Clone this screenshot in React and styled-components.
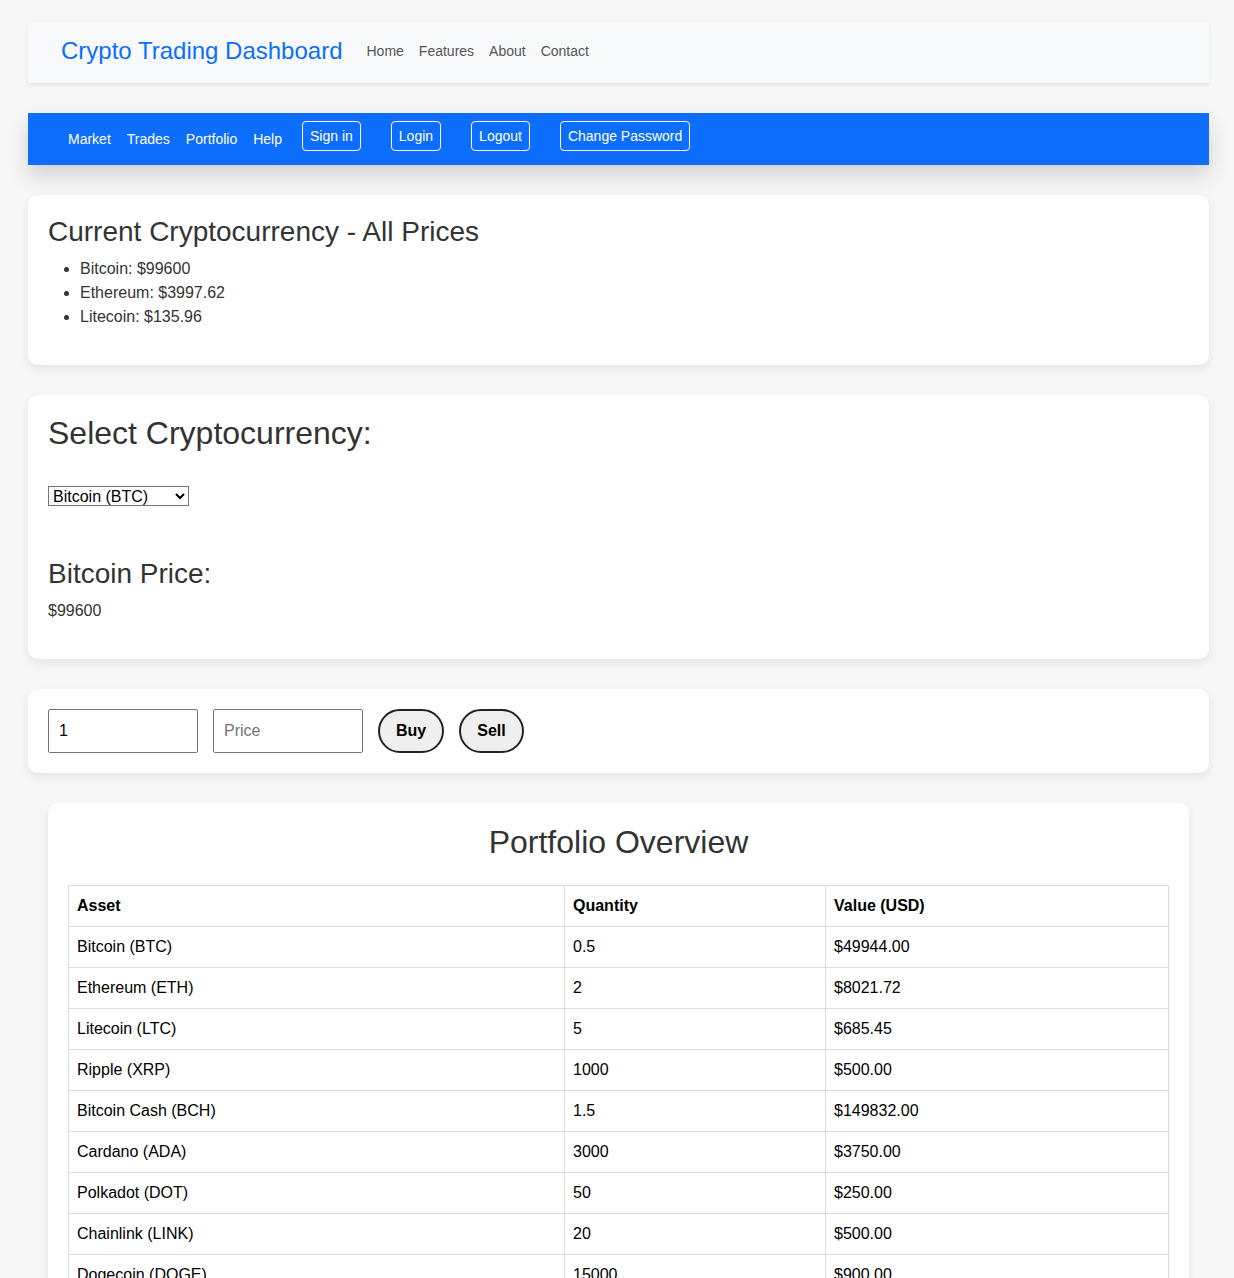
import React, { useState } from 'react'
import styled, { createGlobalStyle } from 'styled-components'

const GlobalStyle = createGlobalStyle`
  body {
    margin: 0;
    background-color: #f7f7f7;
    font-family: "Liberation Sans", Arial, sans-serif;
    color: #333;
  }
`

const prices = [
  { name: 'Bitcoin', price: '$99600' },
  { name: 'Ethereum', price: '$3997.62' },
  { name: 'Litecoin', price: '$135.96' }
]

const holdings = [
  ['Bitcoin (BTC)', '0.5', '$49944.00'],
  ['Ethereum (ETH)', '2', '$8021.72'],
  ['Litecoin (LTC)', '5', '$685.45'],
  ['Ripple (XRP)', '1000', '$500.00'],
  ['Bitcoin Cash (BCH)', '1.5', '$149832.00'],
  ['Cardano (ADA)', '3000', '$3750.00'],
  ['Polkadot (DOT)', '50', '$250.00'],
  ['Chainlink (LINK)', '20', '$500.00'],
  ['Dogecoin (DOGE)', '15000', '$900.00'],
  ['Stellar (XLM)', '2000', '$400.00']
]

const App = () => {
  const [coin, setCoin] = useState('BTC')
  const [amount, setAmount] = useState('1')
  const [price, setPrice] = useState('')

  return (
    <Page>
      <GlobalStyle />
      <Navbar>
        <Brand>Crypto Trading Dashboard</Brand>
        <NavLinks>
          <NavLink>Home</NavLink>
          <NavLink>Features</NavLink>
          <NavLink>About</NavLink>
          <NavLink>Contact</NavLink>
        </NavLinks>
      </Navbar>

      <BlueBar>
        <BarLinks>
          <BarLink>Market</BarLink>
          <BarLink>Trades</BarLink>
          <BarLink>Portfolio</BarLink>
          <BarLink>Help</BarLink>
        </BarLinks>
        <BarButtons>
          <OutlineButton>Sign in</OutlineButton>
          <OutlineButton>Login</OutlineButton>
          <OutlineButton>Logout</OutlineButton>
          <OutlineButton>Change Password</OutlineButton>
        </BarButtons>
      </BlueBar>

      <Card>
        <CardTitle>Current Cryptocurrency - All Prices</CardTitle>
        <PriceList>
          {prices.map(p => (
            <li key={p.name}>
              {p.name}: {p.price}
            </li>
          ))}
        </PriceList>
      </Card>

      <Card>
        <SelectTitle>Select Cryptocurrency:</SelectTitle>
        <CoinSelect value={coin} onChange={e => setCoin(e.target.value)}>
          <option value="BTC">Bitcoin (BTC)</option>
          <option value="ETH">Ethereum (ETH)</option>
          <option value="LTC">Litecoin (LTC)</option>
        </CoinSelect>
        <PriceTitle>Bitcoin Price:</PriceTitle>
        <PriceValue>$99600</PriceValue>
      </Card>

      <Card>
        <TradeRow>
          <TradeInput value={amount} onChange={e => setAmount(e.target.value)} />
          <TradeInput
            placeholder="Price"
            value={price}
            onChange={e => setPrice(e.target.value)}
          />
          <PillButton>Buy</PillButton>
          <PillButton>Sell</PillButton>
        </TradeRow>
      </Card>

      <PortfolioCard>
        <PortfolioTitle>Portfolio Overview</PortfolioTitle>
        <Table>
          <colgroup>
            <col width="496" />
            <col width="261" />
            <col />
          </colgroup>
          <thead>
            <tr>
              <Th>Asset</Th>
              <Th>Quantity</Th>
              <Th>Value (USD)</Th>
            </tr>
          </thead>
          <tbody>
            {holdings.map(row => (
              <tr key={row[0]}>
                <Td>{row[0]}</Td>
                <Td>{row[1]}</Td>
                <Td>{row[2]}</Td>
              </tr>
            ))}
          </tbody>
        </Table>
      </PortfolioCard>
    </Page>
  )
}

export default App

const Page = styled.div`
  padding: 22px 25px 30px 28px;
`

const Navbar = styled.nav`
  display: flex;
  align-items: center;
  box-sizing: border-box;
  height: 61px;
  padding: 0 33px 3px;
  background-color: #f8f9fa;
  box-shadow: 0 2px 4px rgba(0, 0, 0, 0.08);
  margin-bottom: 30px;
`

const Brand = styled.div`
  font-size: 24px;
  color: #0d6efd;
  margin-right: 24px;
`

const NavLinks = styled.div`
  display: flex;
  gap: 15px;
`

const NavLink = styled.a`
  font-size: 14px;
  color: #555;
  cursor: pointer;
`

const BlueBar = styled.div`
  display: flex;
  align-items: center;
  height: 52px;
  padding: 0 40px;
  background-color: #0d6efd;
  box-shadow: 0 10px 22px rgba(0, 0, 0, 0.16);
  margin-bottom: 30px;
`

const BarLinks = styled.div`
  display: flex;
  gap: 16px;
  margin-bottom: 1px;
`

const BarLink = styled.a`
  font-size: 14px;
  color: #fff;
  cursor: pointer;
`

const BarButtons = styled.div`
  display: flex;
  gap: 30px;
  margin-left: 20px;
  margin-bottom: 6px;
`

const OutlineButton = styled.button`
  height: 30px;
  padding: 0 7px;
  font-family: inherit;
  font-size: 14px;
  color: #fff;
  background: transparent;
  border: 1px solid #fff;
  border-radius: 4px;
  cursor: pointer;
`

const Card = styled.section`
  background-color: #fff;
  border-radius: 10px;
  padding: 20px;
  box-shadow: 0 4px 10px rgba(0, 0, 0, 0.08);
  margin-bottom: 30px;
`

const CardTitle = styled.h2`
  margin: 0;
  font-size: 28px;
  font-weight: normal;
  line-height: 34px;
  color: #333;
`

const PriceList = styled.ul`
  margin: 8px 0 16px;
  padding-left: 32px;
  font-size: 16px;
  line-height: 24px;
  color: #333;
`

const SelectTitle = styled.h2`
  margin: 0;
  font-size: 32px;
  font-weight: normal;
  line-height: 37px;
  color: #333;
`

const CoinSelect = styled.select`
  display: block;
  margin-top: 34px;
  width: 141px;
  height: 20px;
  padding: 0;
  font-family: inherit;
  font-size: 16px;
  color: #000;
  border: 1px solid #767676;
  border-radius: 0;
  background: #fff;
`

const PriceTitle = styled.h3`
  margin: 52px 0 0;
  font-size: 28px;
  font-weight: normal;
  line-height: 32px;
  color: #333;
`

const PriceValue = styled.p`
  margin: 11px 0 19px;
  font-size: 16px;
  line-height: 19px;
  color: #333;
`

const TradeRow = styled.div`
  display: flex;
  align-items: center;
  gap: 15px;
`

const TradeInput = styled.input`
  box-sizing: border-box;
  width: 150px;
  height: 44px;
  padding: 0 10px;
  font-family: inherit;
  font-size: 16px;
  color: #000;
  border: 1px solid #767676;
  border-radius: 2px;
  &::placeholder {
    color: #757575;
  }
`

const PillButton = styled.button`
  height: 44px;
  padding: 0 16px;
  font-family: inherit;
  font-size: 16px;
  font-weight: bold;
  color: #000;
  background-color: #efefef;
  border: 2px solid #222;
  border-radius: 22px;
  cursor: pointer;
`

const PortfolioCard = styled.section`
  margin: 0 20px;
  background-color: #fff;
  border-radius: 10px;
  padding: 21px 20px 20px;
  box-shadow: 0 4px 10px rgba(0, 0, 0, 0.08);
`

const PortfolioTitle = styled.h2`
  margin: 0 0 24px;
  text-align: center;
  font-size: 32px;
  font-weight: normal;
  line-height: 37px;
  color: #333;
`

const Table = styled.table`
  width: 100%;
  table-layout: fixed;
  border-collapse: collapse;
  font-size: 16px;
  color: #000;
`

const Th = styled.th`
  text-align: left;
  padding: 10px 8px;
  line-height: 20px;
  border: 1px solid #ddd;
`

const Td = styled.td`
  padding: 10px 8px;
  line-height: 20px;
  border: 1px solid #ddd;
`
